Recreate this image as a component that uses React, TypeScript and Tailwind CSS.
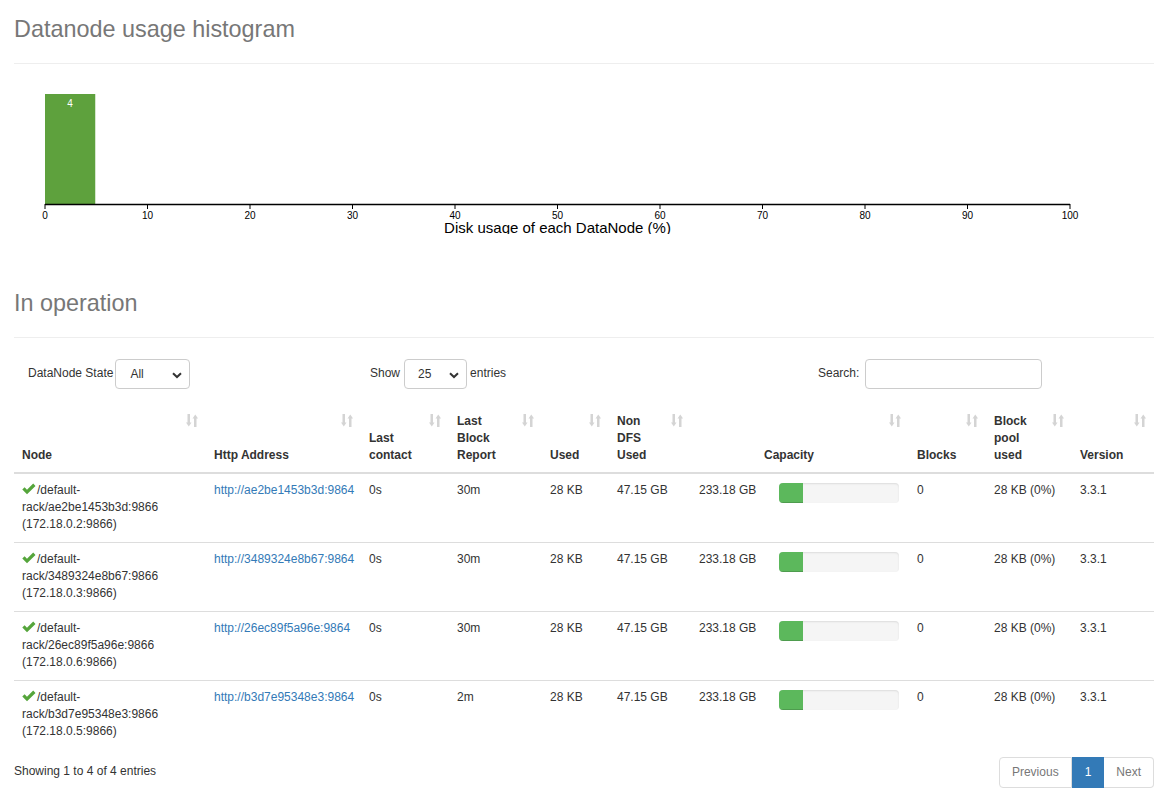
import React from "react";

const font = { fontFamily: '"Liberation Sans", Arial, sans-serif' };

function SortIcon() {
  return (
    <svg className="absolute right-[8px] top-[9px]" width="12" height="13" viewBox="0 0 12 13">
      <g fill="#d4d4d4">
        <rect x="1.5" y="0" width="2.5" height="9" />
        <path d="M0 8.5 L5.5 8.5 L2.75 12.5 Z" />
        <rect x="8" y="4" width="2.5" height="9" />
        <path d="M6.5 4.5 L12 4.5 L9.25 0.5 Z" />
      </g>
    </svg>
  );
}

function Check() {
  return (
    <svg width="14" height="12" viewBox="0 0 14 12" className="inline-block align-[-1px] mr-[1px]">
      <path d="M0.3 6.6 L2.6 4.3 L5 6.7 L11.2 0.6 L13.5 2.9 L5 11.3 Z" fill="#55a53b" />
    </svg>
  );
}

function Chevron() {
  return (
    <svg width="10" height="7" viewBox="0 0 10 7" className="absolute right-[7px] top-[12px]">
      <path d="M1 1.2 L5 5 L9 1.2" stroke="#333" strokeWidth="2" fill="none" />
    </svg>
  );
}

function Histogram() {
  const x0 = 31;
  const x1 = 1056;
  const ticks = [0, 10, 20, 30, 40, 50, 60, 70, 80, 90, 100];
  const sx = (v: number) => x0 + ((x1 - x0) * v) / 100;
  return (
    <svg width="1140" height="170" viewBox="0 0 1140 170" className="block">
      <rect x={sx(0)} y={30} width={sx(5) - sx(0) - 1} height={110} fill="#5ea13d" />
      <text x={(sx(0) + sx(5)) / 2 - 0.5} y={43} textAnchor="middle" fontSize="10" fill="#fff" fontFamily='"Liberation Sans", Arial, sans-serif'>
        4
      </text>
      <line x1={x0} y1={140.5} x2={x1} y2={140.5} stroke="#000" strokeWidth="1.5" />
      {ticks.map((t) => (
        <g key={t}>
          <line x1={sx(t)} y1={140} x2={sx(t)} y2={145} stroke="#000" strokeWidth="1" />
          <text x={sx(t)} y={155} textAnchor="middle" fontSize="10" fill="#000" fontFamily='"Liberation Sans", Arial, sans-serif'>
            {t}
          </text>
        </g>
      ))}
      <text x={(x0 + x1) / 2} y={169} textAnchor="middle" fontSize="15" fill="#000" fontFamily='"Liberation Sans", Arial, sans-serif'>
        Disk usage of each DataNode (%)
      </text>
    </svg>
  );
}

const rows = [
  { id: "ae2be1453b3d", ip: "172.18.0.2", report: "30m" },
  { id: "3489324e8b67", ip: "172.18.0.3", report: "30m" },
  { id: "26ec89f5a96e", ip: "172.18.0.6", report: "30m" },
  { id: "b3d7e95348e3", ip: "172.18.0.5", report: "2m" },
];

const headers: { label: React.ReactNode; w: string; center?: boolean }[] = [
  { label: "Node", w: "w-[192px]" },
  { label: "Http Address", w: "w-[155px]" },
  { label: <>Last<br />contact</>, w: "w-[88px]" },
  { label: <>Last<br />Block<br />Report</>, w: "w-[93px]" },
  { label: "Used", w: "w-[67px]" },
  { label: <>Non<br />DFS<br />Used</>, w: "w-[82px]" },
  { label: "Capacity", w: "w-[218px]", center: true },
  { label: "Blocks", w: "w-[77px]" },
  { label: <>Block<br />pool<br />used</>, w: "w-[86px]" },
  { label: "Version", w: "w-[82px]" },
];

export default function App() {
  return (
    <div className="bg-white text-[#333] text-[12px] leading-[17.14px] w-[1165px] min-h-[798px]" style={font}>
      <div className="pl-[14px] w-[1154px]">
        <div className="h-[64px] border-b border-[#eee] pt-[16px]">
          <h1 className="text-[23.4px] leading-[27px] text-[#777] font-normal">Datanode usage histogram</h1>
        </div>
        <Histogram />
        <div className="mt-[40px] h-[64px] border-b border-[#eee] pt-[16px]">
          <h1 className="text-[23.4px] leading-[27px] text-[#777] font-normal">In operation</h1>
        </div>

        <div className="mt-[21px] flex items-center h-[30px]">
          <div className="w-[356px] flex items-center pl-[14px]">
            <span className="mr-[2px]">DataNode State</span>
            <div className="relative w-[75px] h-[30px] border border-[#ccc] rounded-[4px] pl-[14px] leading-[28px]">
              All
              <Chevron />
            </div>
          </div>
          <div className="w-[448px] flex items-center">
            <span className="mr-[4px]">Show</span>
            <div className="relative w-[63px] h-[30px] border border-[#ccc] rounded-[4px] pl-[13px] leading-[28px]">
              25
              <Chevron />
            </div>
            <span className="ml-[3px]">entries</span>
          </div>
          <div className="flex items-center">
            <span className="mr-[6px]">Search:</span>
            <div className="w-[177px] h-[30px] border border-[#ccc] rounded-[4px]" />
          </div>
        </div>

        <table className="mt-[16px] w-[1140px] border-collapse table-fixed">
          <thead>
            <tr>
              {headers.map((h, i) => (
                <th
                  key={i}
                  className={`${h.w} relative align-bottom font-bold p-[8px] pr-[30px] border-b-2 border-[#ddd] ${h.center ? "text-center" : "text-left"}`}
                >
                  {h.label}
                  <SortIcon />
                </th>
              ))}
            </tr>
          </thead>
          <tbody className="leading-[17px]">
            {rows.map((r, i) => (
              <tr key={r.id} className={`${i > 0 ? "border-t border-[#ddd]" : ""} align-top`}>
                <td className="px-[8px] pt-[8px] pb-[9px]">
                  <Check />/default-
                  <br />
                  rack/{r.id}:9866
                  <br />({r.ip}:9866)
                </td>
                <td className="px-[8px] pt-[8px]">
                  <span className="text-[#337ab7]">http://{r.id}:9864</span>
                </td>
                <td className="px-[8px] pt-[8px]">0s</td>
                <td className="px-[8px] pt-[8px]">{r.report}</td>
                <td className="px-[8px] pt-[8px]">28 KB</td>
                <td className="px-[8px] pt-[8px]">47.15 GB</td>
                <td className="px-[8px] pt-[8px]">
                  <div className="flex">
                    <span className="w-[80px]">233.18 GB</span>
                    <div className="mt-[1px] w-[120px] h-[20px] bg-[#f5f5f5] rounded-[4px] overflow-hidden shadow-[inset_0_1px_2px_rgba(0,0,0,0.1)]">
                      <div className="w-[24px] h-full bg-[#5cb85c] shadow-[inset_0_-1px_0_rgba(0,0,0,0.15)]" />
                    </div>
                  </div>
                </td>
                <td className="px-[8px] pt-[8px]">0</td>
                <td className="px-[8px] pt-[8px]">28 KB (0%)</td>
                <td className="px-[8px] pt-[8px]">3.3.1</td>
              </tr>
            ))}
          </tbody>
        </table>

        <div className="flex items-center justify-between mt-[8px]">
          <div className="-mt-[2px]">Showing 1 to 4 of 4 entries</div>
          <div className="flex h-[31px] leading-[29px]">
            <span className="px-[12px] border border-[#ddd] rounded-l-[4px] text-[#777]">Previous</span>
            <span className="px-[12px] bg-[#337ab7] border border-[#337ab7] text-white">1</span>
            <span className="px-[12px] border border-[#ddd] border-l-0 rounded-r-[4px] text-[#777]">Next</span>
          </div>
        </div>
      </div>
    </div>
  );
}
